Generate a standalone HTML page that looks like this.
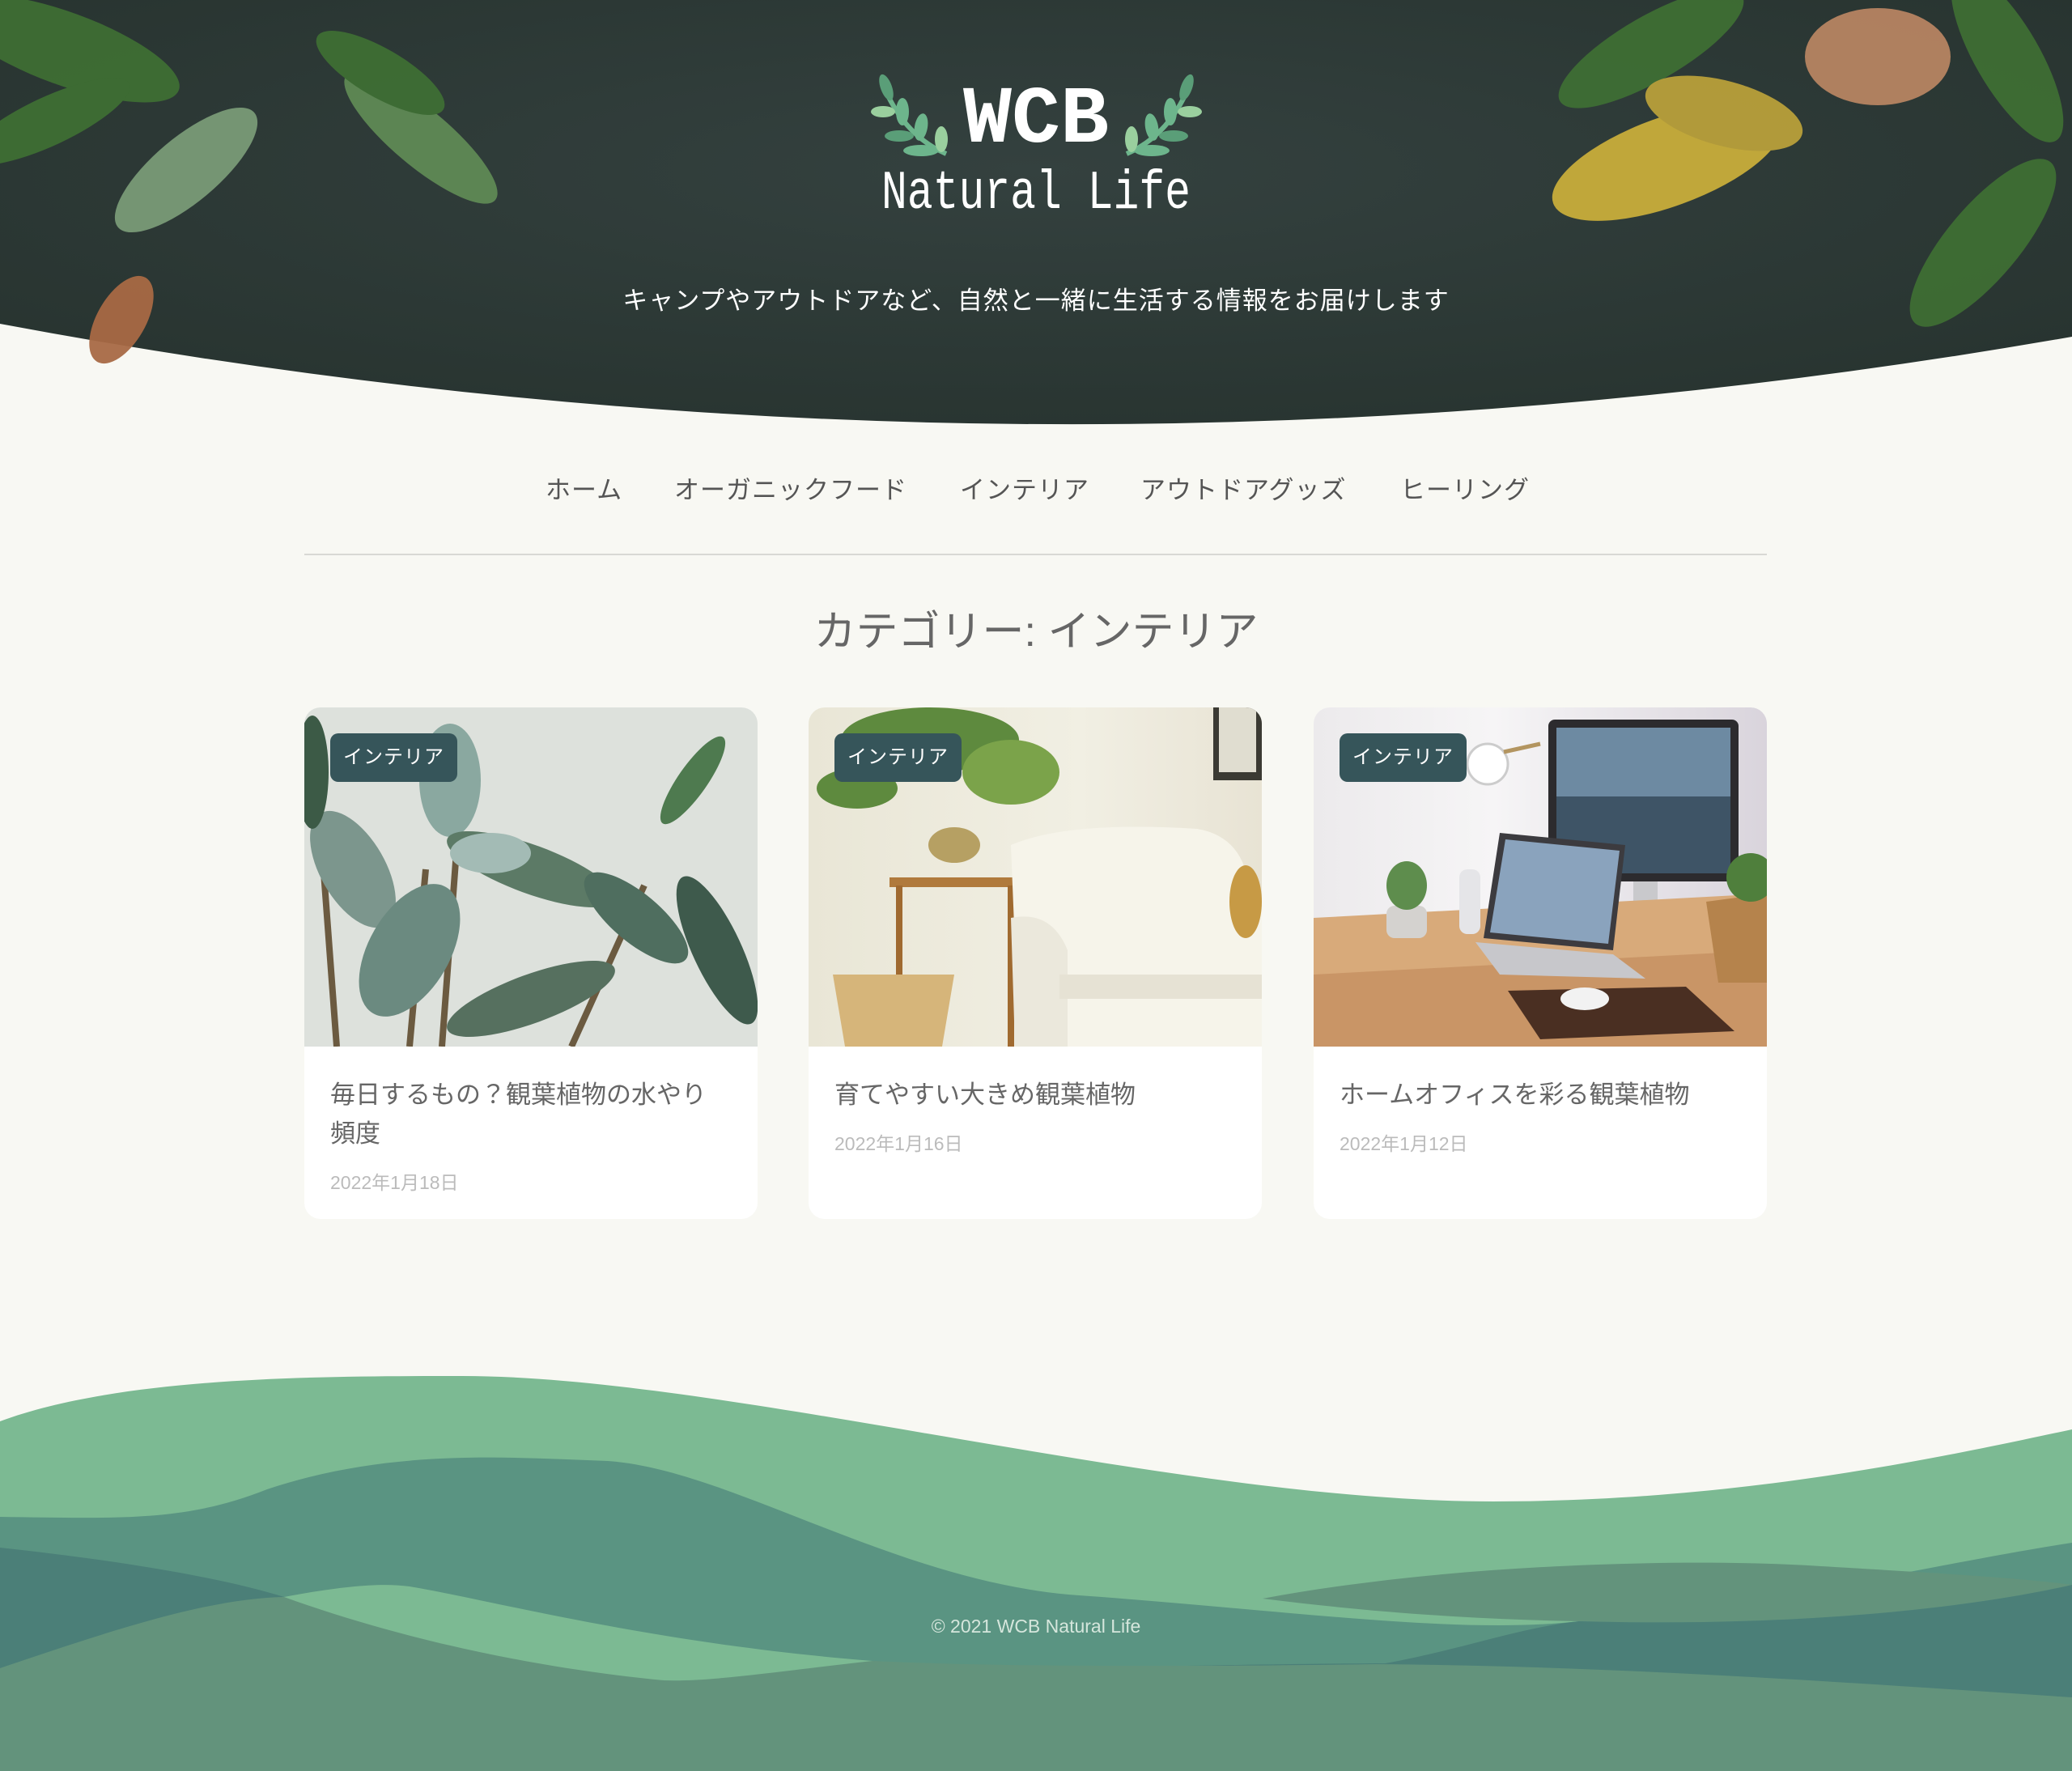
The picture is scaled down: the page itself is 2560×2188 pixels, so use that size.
<!DOCTYPE html>
<html><head><meta charset="utf-8"><style>
*{margin:0;padding:0;box-sizing:border-box}
body{width:2560px;height:2188px;background:#f8f8f3;position:relative;overflow:hidden;font-family:"Liberation Sans","Noto Sans CJK JP",sans-serif}
.abs{position:absolute}
.nav{position:absolute;top:580px;font-size:31px;color:#555;white-space:nowrap;letter-spacing:1px}
.card{position:absolute;top:874px;width:560px;height:632px;background:#fff;border-radius:20px;overflow:hidden}
.img{position:absolute;left:0;top:0;width:560px;height:419px;overflow:hidden}
.badge{position:absolute;left:32px;top:32px;height:60px;padding:0 16px;background:#36555a;color:#fff;border-radius:10px;font-size:24px;line-height:60px;letter-spacing:1px}
.title{position:absolute;left:32px;top:455px;width:490px;font-size:31px;line-height:48px;color:#666}
.date{position:absolute;left:32px;font-size:23px;color:#bbb}
</style></head><body>

<svg class="abs" style="left:0;top:0" width="2560" height="530" viewBox="0 0 2560 530">
<defs><radialGradient id="hg" cx="50%" cy="40%" r="70%"><stop offset="0" stop-color="#34413f"/><stop offset="1" stop-color="#27332f"/></radialGradient></defs>
<path d="M0,0H2560V416Q1280,640 0,400Z" fill="url(#hg)"/>
<g fill="#3f6e34" opacity=".95">
<ellipse cx="80" cy="60" rx="150" ry="45" transform="rotate(20 80 60)"/>
<ellipse cx="60" cy="150" rx="110" ry="30" transform="rotate(-25 60 150)"/>
<ellipse cx="230" cy="210" rx="110" ry="40" transform="rotate(-40 230 210)" fill="#7a9a78"/>
<ellipse cx="520" cy="170" rx="120" ry="35" transform="rotate(40 520 170)" fill="#5f8a55"/>
<ellipse cx="470" cy="90" rx="90" ry="30" transform="rotate(30 470 90)"/>
<ellipse cx="2040" cy="60" rx="130" ry="40" transform="rotate(-30 2040 60)"/>
<ellipse cx="2480" cy="70" rx="120" ry="40" transform="rotate(60 2480 70)"/>
<ellipse cx="2450" cy="300" rx="130" ry="45" transform="rotate(-50 2450 300)"/>
<ellipse cx="2060" cy="200" rx="150" ry="55" transform="rotate(-20 2060 200)" fill="#c9ad3a"/>
<ellipse cx="2130" cy="140" rx="100" ry="40" transform="rotate(15 2130 140)" fill="#b9a03a"/>
<ellipse cx="2320" cy="70" rx="90" ry="60" fill="#b78462"/>
<ellipse cx="150" cy="395" rx="30" ry="60" transform="rotate(30 150 395)" fill="#a86a45"/>
</g>
<g transform="translate(1083,90)">
<path d="M15,30 Q40,80 86,100" stroke="#6db58c" stroke-width="6" fill="none"/>
<ellipse cx="12" cy="18" rx="7" ry="17" fill="#5a9e78" transform="rotate(-20 12 18)"/>
<ellipse cx="8" cy="48" rx="15" ry="7" fill="#9acf9e"/>
<ellipse cx="32" cy="48" rx="8" ry="17" fill="#6db58c"/>
<ellipse cx="28" cy="78" rx="18" ry="7" fill="#5a9e78"/>
<ellipse cx="55" cy="67" rx="8" ry="17" fill="#6db58c" transform="rotate(10 55 67)"/>
<ellipse cx="55" cy="96" rx="22" ry="7" fill="#6db58c"/>
<ellipse cx="80" cy="82" rx="8" ry="16" fill="#9acf9e"/>
</g>
<g transform="translate(1478,90) scale(-1,1)">
<path d="M15,30 Q40,80 86,100" stroke="#6db58c" stroke-width="6" fill="none"/>
<ellipse cx="12" cy="18" rx="7" ry="17" fill="#5a9e78" transform="rotate(-20 12 18)"/>
<ellipse cx="8" cy="48" rx="15" ry="7" fill="#9acf9e"/>
<ellipse cx="32" cy="48" rx="8" ry="17" fill="#6db58c"/>
<ellipse cx="28" cy="78" rx="18" ry="7" fill="#5a9e78"/>
<ellipse cx="55" cy="67" rx="8" ry="17" fill="#6db58c" transform="rotate(10 55 67)"/>
<ellipse cx="55" cy="96" rx="22" ry="7" fill="#6db58c"/>
<ellipse cx="80" cy="82" rx="8" ry="16" fill="#9acf9e"/>
</g>
</svg>

<div class="abs" style="left:0;width:2560px;top:90px;text-align:center;font-family:'Liberation Mono',monospace;font-size:100px;line-height:120px;color:#fff;font-weight:bold">WCB</div>
<div class="abs" style="left:0;width:2560px;top:198px;text-align:center;font-family:'Liberation Mono',monospace;font-size:68px;line-height:84px;color:#fff;transform:scaleX(.78)">Natural Life</div>
<div class="abs" style="left:0;width:2560px;top:350px;text-align:center;font-size:31px;line-height:44px;color:#fff;letter-spacing:1px">キャンプやアウトドアなど、自然と一緒に生活する情報をお届けします</div>

<div class="nav" style="left:674px">ホーム</div>
<div class="nav" style="left:833px">オーガニックフード</div>
<div class="nav" style="left:1186px">インテリア</div>
<div class="nav" style="left:1409px">アウトドアグッズ</div>
<div class="nav" style="left:1730px">ヒーリング</div>
<div class="abs" style="left:376px;top:684px;width:1807px;height:2px;background:#d8d8d4"></div>
<div class="abs" style="left:0;width:2560px;top:746px;text-align:center;font-size:52px;line-height:70px;color:#666">カテゴリー: インテリア</div>

<div class="card" style="left:376px">
 <div class="img" style="background:#dde1dc">
  <svg width="560" height="419">
   <g stroke="#6b5a40" stroke-width="8"><line x1="20" y1="150" x2="40" y2="419"/><line x1="190" y1="150" x2="170" y2="419"/><line x1="150" y1="200" x2="130" y2="419"/><line x1="420" y1="220" x2="330" y2="419"/></g>
   <g fill="#4f6e5f"><ellipse cx="180" cy="90" rx="38" ry="70" fill="#8aa8a0"/><ellipse cx="60" cy="200" rx="40" ry="80" fill="#7c968d" transform="rotate(-30 60 200)"/><ellipse cx="130" cy="300" rx="50" ry="90" fill="#6b8a80" transform="rotate(30 130 300)"/><ellipse cx="280" cy="200" rx="110" ry="30" fill="#5c7a66" transform="rotate(20 280 200)"/><ellipse cx="230" cy="180" rx="50" ry="25" fill="#a3bbb5"/><ellipse cx="410" cy="260" rx="80" ry="30" transform="rotate(40 410 260)"/><ellipse cx="480" cy="90" rx="18" ry="65" fill="#4e7a4f" transform="rotate(35 480 90)"/><ellipse cx="510" cy="300" rx="30" ry="100" fill="#3e5a4c" transform="rotate(-25 510 300)"/><ellipse cx="10" cy="80" rx="20" ry="70" fill="#3c5a46"/><ellipse cx="280" cy="360" rx="110" ry="30" fill="#56705f" transform="rotate(-20 280 360)"/></g>
  </svg>
 </div>
 <div class="badge">インテリア</div>
 <div class="title">毎日するもの？観葉植物の水やり<br>頻度</div>
 <div class="date" style="top:568px">2022年1月18日</div>
</div>

<div class="card" style="left:999px">
 <div class="img" style="background:linear-gradient(90deg,#e9e6d6,#f1efe3 60%,#e8e3d4)">
  <svg width="560" height="419">
   <rect x="500" y="0" width="60" height="90" fill="#3b3a33"/><rect x="507" y="0" width="46" height="80" fill="#e0ddd0"/>
   <g fill="#5e8a3e"><ellipse cx="150" cy="40" rx="110" ry="40"/><ellipse cx="250" cy="80" rx="60" ry="40" fill="#7ba34a"/><ellipse cx="60" cy="100" rx="50" ry="25"/></g>
   <ellipse cx="180" cy="170" rx="32" ry="22" fill="#b6a063"/>
   <rect x="100" y="210" width="160" height="12" fill="#b07a3c"/><line x1="112" y1="220" x2="112" y2="419" stroke="#a06a30" stroke-width="8"/><line x1="250" y1="220" x2="250" y2="419" stroke="#a06a30" stroke-width="8"/>
   <path d="M30,330 H180 L165,419 H45Z" fill="#d6b57a"/>
   <path d="M250,170 Q320,140 480,150 Q540,160 545,230 L560,240 V419 H260 Z" fill="#f6f4ea"/>
   <path d="M250,260 Q300,250 320,300 V419 H255Z" fill="#ebe8dc"/>
   <rect x="310" y="330" width="250" height="30" fill="#e6e2d4"/>
   <ellipse cx="540" cy="240" rx="20" ry="45" fill="#c79a45"/>
  </svg>
 </div>
 <div class="badge">インテリア</div>
 <div class="title">育てやすい大きめ観葉植物</div>
 <div class="date" style="top:520px">2022年1月16日</div>
</div>

<div class="card" style="left:1623px">
 <div class="img" style="background:linear-gradient(90deg,#eceaec,#f6f5f6 40%,#d9d4dc)">
  <svg width="560" height="419">
   <rect x="290" y="15" width="235" height="200" rx="8" fill="#2c2b2e"/><rect x="300" y="25" width="215" height="180" fill="#6d8aa2"/><rect x="300" y="110" width="215" height="95" fill="#3e5466"/>
   <rect x="395" y="215" width="30" height="60" fill="#c9c9cc"/>
   <path d="M0,260 L560,230 V419 H0Z" fill="#d8aa7a"/><path d="M0,330 L560,300 V419 H0Z" fill="#c99566"/>
   <path d="M230,155 L385,170 L370,300 L210,285Z" fill="#3c3b3f"/><path d="M237,163 L378,177 L364,292 L218,278Z" fill="#8aa3bd"/>
   <path d="M200,290 L370,305 L410,335 L230,330Z" fill="#c7c7cb"/>
   <path d="M240,350 L460,345 L520,400 L280,410Z" fill="#4a2f22"/>
   <ellipse cx="335" cy="360" rx="30" ry="14" fill="#f2f2f2"/>
   <rect x="90" y="245" width="50" height="40" rx="10" fill="#d4d2cf"/><g fill="#5e8d4d"><ellipse cx="115" cy="220" rx="25" ry="30"/></g>
   <rect x="180" y="200" width="26" height="80" rx="10" fill="#e5e5e8"/>
   <path d="M485,240 L560,230 V340 H500Z" fill="#b5834c"/><ellipse cx="540" cy="210" rx="30" ry="30" fill="#4f7f3c"/>
   <ellipse cx="215" cy="70" rx="25" ry="25" fill="#ffffff" stroke="#ccc" stroke-width="3"/><line x1="235" y1="55" x2="280" y2="45" stroke="#b39560" stroke-width="5"/>
  </svg>
 </div>
 <div class="badge">インテリア</div>
 <div class="title">ホームオフィスを彩る観葉植物</div>
 <div class="date" style="top:520px">2022年1月12日</div>
</div>

<svg class="abs" style="left:0;top:0" width="2560" height="2188" viewBox="0 0 2560 2188">
 <path d="M0,1756 C150,1700 400,1700 571,1700 C900,1700 1450,1855 1845,1855 C2150,1855 2400,1800 2560,1766 V2188 H0Z" fill="#7cba93"/>
 <path d="M0,1874 C150,1876 230,1880 330,1840 C480,1790 620,1800 751,1805 C900,1815 1100,1950 1320,1970 C1600,1990 1800,2020 1951,2003 C2150,1990 2400,1930 2560,1906 V2188 H0Z" fill="#5a9482"/>
 <path d="M1560,1975 C1800,1930 2100,1925 2250,1935 C2420,1945 2500,1950 2560,1958 C2420,1990 2200,2010 1951,2003 C1800,2000 1680,1990 1560,1975Z" fill="#63937c"/>
 <path d="M0,1912 C120,1925 260,1945 351,1973 C500,2020 700,2060 900,2068 C1150,2070 1300,2058 1700,2055 C2000,2058 2300,2080 2560,2097 V2188 H0Z" fill="#4b7f78"/>
 <path d="M1951,2003 C2200,2010 2420,1990 2560,1958 V2100 C2300,2080 2100,2065 1700,2057 C1800,2040 1880,2010 1951,2003Z" fill="#4b7f78"/>
 <path d="M0,2061 C150,2010 260,1975 351,1973 C420,1960 470,1955 506,1960 C650,1985 850,2050 1078,2052 C1200,2058 1400,2060 1700,2056 C2000,2058 2300,2080 2560,2097 V2188 H0Z" fill="#63937c"/>
 <path d="M351,1973 C420,1960 470,1955 506,1960 C600,1975 800,2030 1078,2052 C960,2065 880,2078 820,2076 C650,2060 480,2020 351,1973Z" fill="#7cba93"/>
</svg>
<div class="abs" style="left:0;width:2560px;top:1992px;text-align:center;font-size:23px;line-height:34px;color:#d5e6dc">© 2021 WCB Natural Life</div>
</body></html>
